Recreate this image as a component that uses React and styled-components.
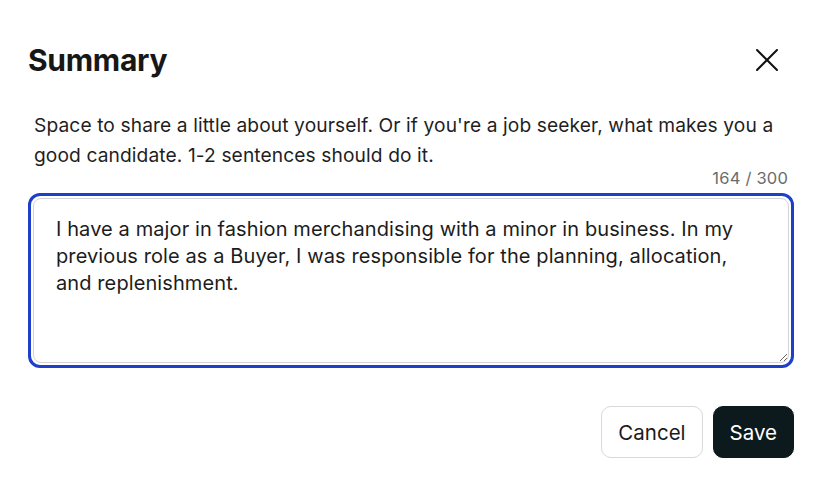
import React, { useState, useRef, useEffect } from 'react';
import styled, { createGlobalStyle } from 'styled-components';

const GlobalStyle = createGlobalStyle`
  html, body {
    margin: 0;
    padding: 0;
    background: #ffffff;
  }
  body {
    font-family: Inter, "Noto Sans", "Liberation Sans", sans-serif;
    color: #1c1c1c;
  }
`;

const Dialog = styled.div`
  width: 820px;
  height: 490px;
  box-sizing: border-box;
  padding: 40px 26px 0 28px;
  display: flex;
  flex-direction: column;
`;

const Header = styled.div`
  display: flex;
  justify-content: space-between;
  align-items: center;
  height: 40px;
`;

const Title = styled.h1`
  margin: 0;
  font-size: 30px;
  font-weight: 700;
  letter-spacing: -0.3px;
  color: #171717;
`;

const CloseButton = styled.button`
  width: 34px;
  height: 34px;
  margin-right: 10px;
  border: none;
  background: transparent;
  padding: 0;
  display: flex;
  align-items: center;
  justify-content: center;
  cursor: pointer;
  color: #111;
`;

const Description = styled.p`
  margin: 30px 4px 0 6px;
  font-size: 19.2px;
  line-height: 30px;
  color: #1f1f1f;
  letter-spacing: 0.1px;
`;

const Counter = styled.div`
  align-self: flex-end;
  margin: 0 6px 0 0;
  font-size: 16.5px;
  line-height: 16px;
  color: #6b6b6b;
  letter-spacing: 0.2px;
`;

const FieldRing = styled.div`
  margin-top: 7px;
  border: 3px solid #1d3fc9;
  border-radius: 12px;
  padding: 2px;
  height: 175px;
  box-sizing: border-box;
  display: flex;
`;

const TextArea = styled.textarea`
  flex: 1;
  resize: vertical;
  border: 1px solid #d4d4d4;
  border-radius: 8px;
  padding: 17px 22px 16px;
  font-family: Inter, "Noto Sans", "Liberation Sans", sans-serif;
  font-size: 20px;
  line-height: 27px;
  color: #1c1c1c;
  caret-color: #111;
  outline: none;
  letter-spacing: 0.1px;
`;

const Footer = styled.div`
  display: flex;
  justify-content: flex-end;
  gap: 10px;
  margin-top: 38px;
`;

const Button = styled.button`
  height: 52px;
  padding: 0 16px;
  border-radius: 10px;
  font-family: Inter, "Noto Sans", "Liberation Sans", sans-serif;
  font-size: 20.5px;
  cursor: pointer;
  border: 1px solid ${p => (p.$primary ? '#0c1a1d' : '#d9d9d9')};
  background: ${p => (p.$primary ? '#0c1a1d' : '#ffffff')};
  color: ${p => (p.$primary ? '#ffffff' : '#1a1a1a')};
`;

const initial =
  'I have a major in fashion merchandising with a minor in business. In my previous role as a Buyer, I was responsible for the planning, allocation, and replenishment.';

export default function App() {
  const [text, setText] = useState(initial);
  const ref = useRef(null);

  useEffect(() => {
    const el = ref.current;
    if (el) {
      el.focus();
      el.setSelectionRange(el.value.length, el.value.length);
    }
  }, []);

  return (
    <>
      <GlobalStyle />
      <Dialog>
        <Header>
          <Title>Summary</Title>
          <CloseButton aria-label="Close">
            <svg width="22" height="22" viewBox="0 0 22 22" fill="none" stroke="currentColor" strokeWidth="2" strokeLinecap="round">
              <path d="M1 1 L21 21 M21 1 L1 21" />
            </svg>
          </CloseButton>
        </Header>
        <Description>
          Space to share a little about yourself. Or if you're a job seeker, what makes you a good candidate. 1-2 sentences should do it.
        </Description>
        <Counter>{text.length} / 300</Counter>
        <FieldRing>
          <TextArea ref={ref} value={text} onChange={e => setText(e.target.value)} maxLength={300} />
        </FieldRing>
        <Footer>
          <Button>Cancel</Button>
          <Button $primary>Save</Button>
        </Footer>
      </Dialog>
    </>
  );
}
